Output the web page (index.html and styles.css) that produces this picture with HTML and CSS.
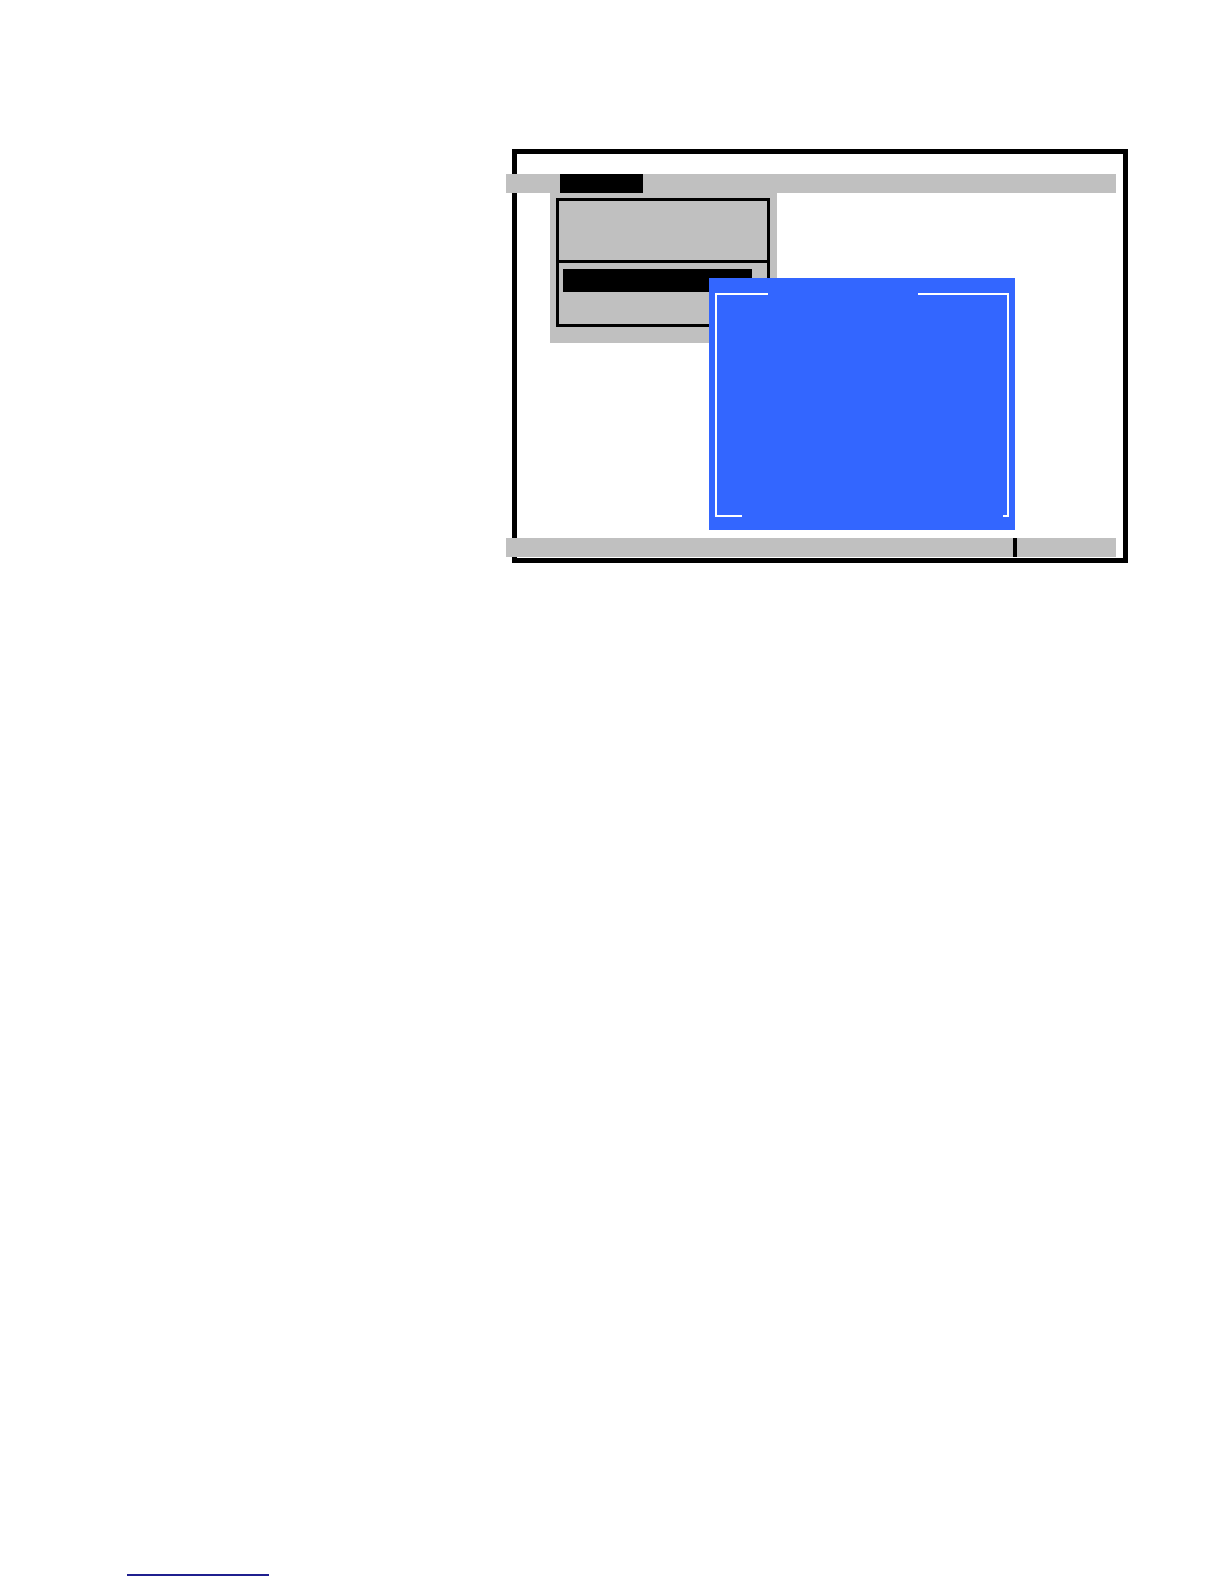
FILE: index.html
```html
<!DOCTYPE html>
<html lang="en">
<head>
<meta charset="utf-8">
<title>Setup screen</title>
<link rel="stylesheet" href="styles.css">
</head>
<body>
<div class="stage">
  <div class="screen">
    <div class="menubar">
      <div class="menu-tab"></div>
    </div>
    <div class="workarea"></div>
    <div class="statusbar">
      <div class="status-divider"></div>
    </div>

    <div class="dropdown">
      <div class="dropdown-box">
        <div class="dropdown-top"></div>
        <div class="dropdown-bottom">
          <div class="dropdown-highlight"></div>
        </div>
      </div>
    </div>

    <div class="dialog">
      <div class="dialog-frame">
        <div class="edge edge-top">
          <span class="seg seg-tl"></span>
          <span class="seg seg-tr"></span>
        </div>
        <div class="dialog-body"></div>
        <div class="edge edge-bottom">
          <span class="seg seg-bl"></span>
          <span class="seg seg-br"></span>
        </div>
      </div>
    </div>
  </div>
</div>
<div class="footer">
  <a class="footnote-link" href="#"></a>
</div>
</body>
</html>
```

FILE: styles.css
```css
html, body {
  margin: 0;
  padding: 0;
  background: #ffffff;
  font-family: "Liberation Sans", Arial, sans-serif;
}

.stage {
  padding: 149px 0 0 512px;
}

.screen {
  position: relative;
  box-sizing: border-box;
  width: 616px;
  height: 414px;
  border: 5px solid #000;
  padding-top: 20px;
  display: flex;
  flex-direction: column;
  background: #fff;
}

.menubar {
  height: 19px;
  width: 610px;
  margin-left: -11px;
  background: #c0c0c0;
  flex: none;
  display: flex;
}

.menu-tab {
  width: 83px;
  height: 20px;
  margin-left: 54px;
  background: #000;
}

.workarea {
  flex: 1;
}

.statusbar {
  height: 19px;
  width: 610px;
  margin-left: -11px;
  margin-bottom: 1px;
  background: #c0c0c0;
  flex: none;
  display: flex;
}

.status-divider {
  width: 4px;
  margin-left: 507px;
  background: #000;
}

.dropdown {
  position: absolute;
  left: 33px;
  top: 39px;
  box-sizing: border-box;
  width: 227px;
  height: 150px;
  padding: 5px 7px 0 6px;
  background: #c0c0c0;
}

.dropdown-box {
  box-sizing: border-box;
  width: 214px;
  border: 3px solid #000;
}

.dropdown-top {
  height: 59px;
}

.dropdown-bottom {
  box-sizing: border-box;
  height: 64px;
  border-top: 3px solid #000;
  padding: 6px 0 0 4px;
}

.dropdown-highlight {
  width: 189px;
  height: 23px;
  background: #000;
}

.dialog {
  position: absolute;
  left: 192px;
  top: 124px;
  box-sizing: border-box;
  width: 306px;
  height: 252px;
  padding: 15px 6px 13px 6px;
  background: #3366ff;
  display: flex;
}

.dialog-frame {
  flex: 1;
  display: flex;
  flex-direction: column;
  border-left: 2px solid #fff;
  border-right: 2px solid #fff;
}

.edge {
  height: 2px;
  display: flex;
  justify-content: space-between;
  flex: none;
}

.seg {
  display: block;
  height: 2px;
  background: #fff;
}

.seg-tl { width: 51px; }
.seg-tr { width: 89px; }
.seg-bl { width: 25px; }
.seg-br { width: 4px; }

.dialog-body {
  flex: 1;
}

.footer {
  padding: 1011px 0 0 127px;
}

.footnote-link {
  display: block;
  width: 142px;
  height: 2px;
  background: #1f1f8f;
}
```
